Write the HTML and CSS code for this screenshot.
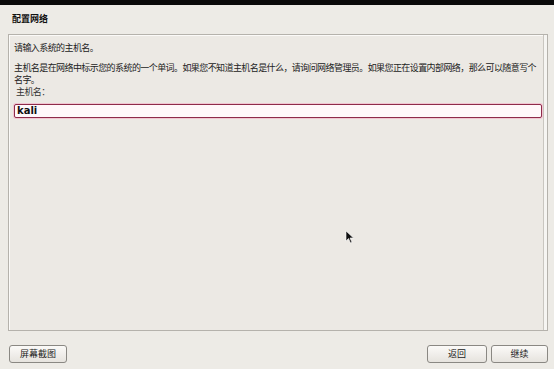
FILE: index.html
```html
<!DOCTYPE html>
<html lang="zh-CN">
<head>
<meta charset="utf-8">
<link rel="stylesheet" href="styles.css">
</head>
<body>
<div class="topbar"></div>
<div class="page">
  <div class="title">配置网络</div>
  <div class="panel">
    <div class="content">
      <p class="line">请输入系统的主机名。</p>
      <p class="para">主机名是在网络中标示您的系统的一个单词。如果您不知道主机名是什么，请询问网络管理员。如果您正在设置内部网络，那么可以随意写个名字。</p>
      <p class="label">主机名：</p>
      <div class="input">kali</div>
    </div>
    <div class="scroll"></div>
  </div>
  <div class="buttons">
    <button class="btn wide">屏幕截图</button>
    <div class="spacer"></div>
    <button class="btn back">返回</button>
    <button class="btn next">继续</button>
  </div>
</div>
<svg class="cursor" width="10" height="14" viewBox="0 0 10 14"><path d="M1 1 L1 11 L3.5 8.5 L5.5 13 L7 12.3 L5 8 L8.5 8 Z" fill="#111" stroke="#fff" stroke-width="0.6"/></svg>
</body>
</html>
```
FILE: styles.css
```css
html, body { margin: 0; padding: 0; }
body {
  width: 554px; height: 369px; overflow: hidden;
  background: #edebe6;
  font-family: "Noto Sans CJK SC", "DejaVu Sans", sans-serif;
  font-size: 9px; color: #222;
  position: relative;
}
.topbar { height: 5px; background: #0a0a0a; }
.page { padding: 0 6px 0 8px; display: flex; flex-direction: column; height: 364px; box-sizing: border-box; }
.title { font-weight: bold; font-size: 9px; padding: 8px 0 0 4px; height: 21px; line-height: 12px; color: #111; }
.panel {
  height: 297px; box-sizing: border-box;
  border: 1px solid #b5b2ac; border-right: none;
  display: flex; background: #ece9e4;
  box-shadow: inset 1px 1px 0 #fbfaf8;
}
.content { flex: 1; padding: 7px 0 0 5px; letter-spacing: -0.58px; }
.scroll { width: 3px; border-left: 1px solid #c9c6c0; border-right: 1px solid #b5b2ac; background: #f6f5f2; }
p { margin: 0; }
.line { line-height: 12px; }
.para { margin-top: 8px; line-height: 12px; padding-right: 0; }
.label { padding-left: 2px; line-height: 12px; color: #333; }
.input {
  margin-top: 6px; margin-right: 1px;
  height: 14px; box-sizing: border-box;
  border: 1px solid #8e2b4a; border-radius: 2px;
  background: #fff8fa; letter-spacing: 0;
  font-family: "DejaVu Sans", sans-serif; font-weight: bold; font-size: 10px; line-height: 12px;
  padding-left: 2px; color: #111;
  box-shadow: 0 0 0 1px #f1c6d2;
}
.buttons { display: flex; align-items: center; gap: 4px; margin-top: 14px; }
.spacer { flex: 1; }
.btn {
  font-family: "Noto Sans CJK SC", sans-serif; font-size: 9px; color: #222;
  width: 60px; height: 18px; padding: 0; margin: 0; line-height: 16px;
  border: 1px solid #8a8883; border-radius: 3px;
  background: linear-gradient(#fbfaf8, #e6e3de);
}
.btn.wide { width: 58px; margin-left: 1px; }
.btn.next { width: 57px; }
.cursor { position: absolute; left: 345px; top: 230px; }
```
